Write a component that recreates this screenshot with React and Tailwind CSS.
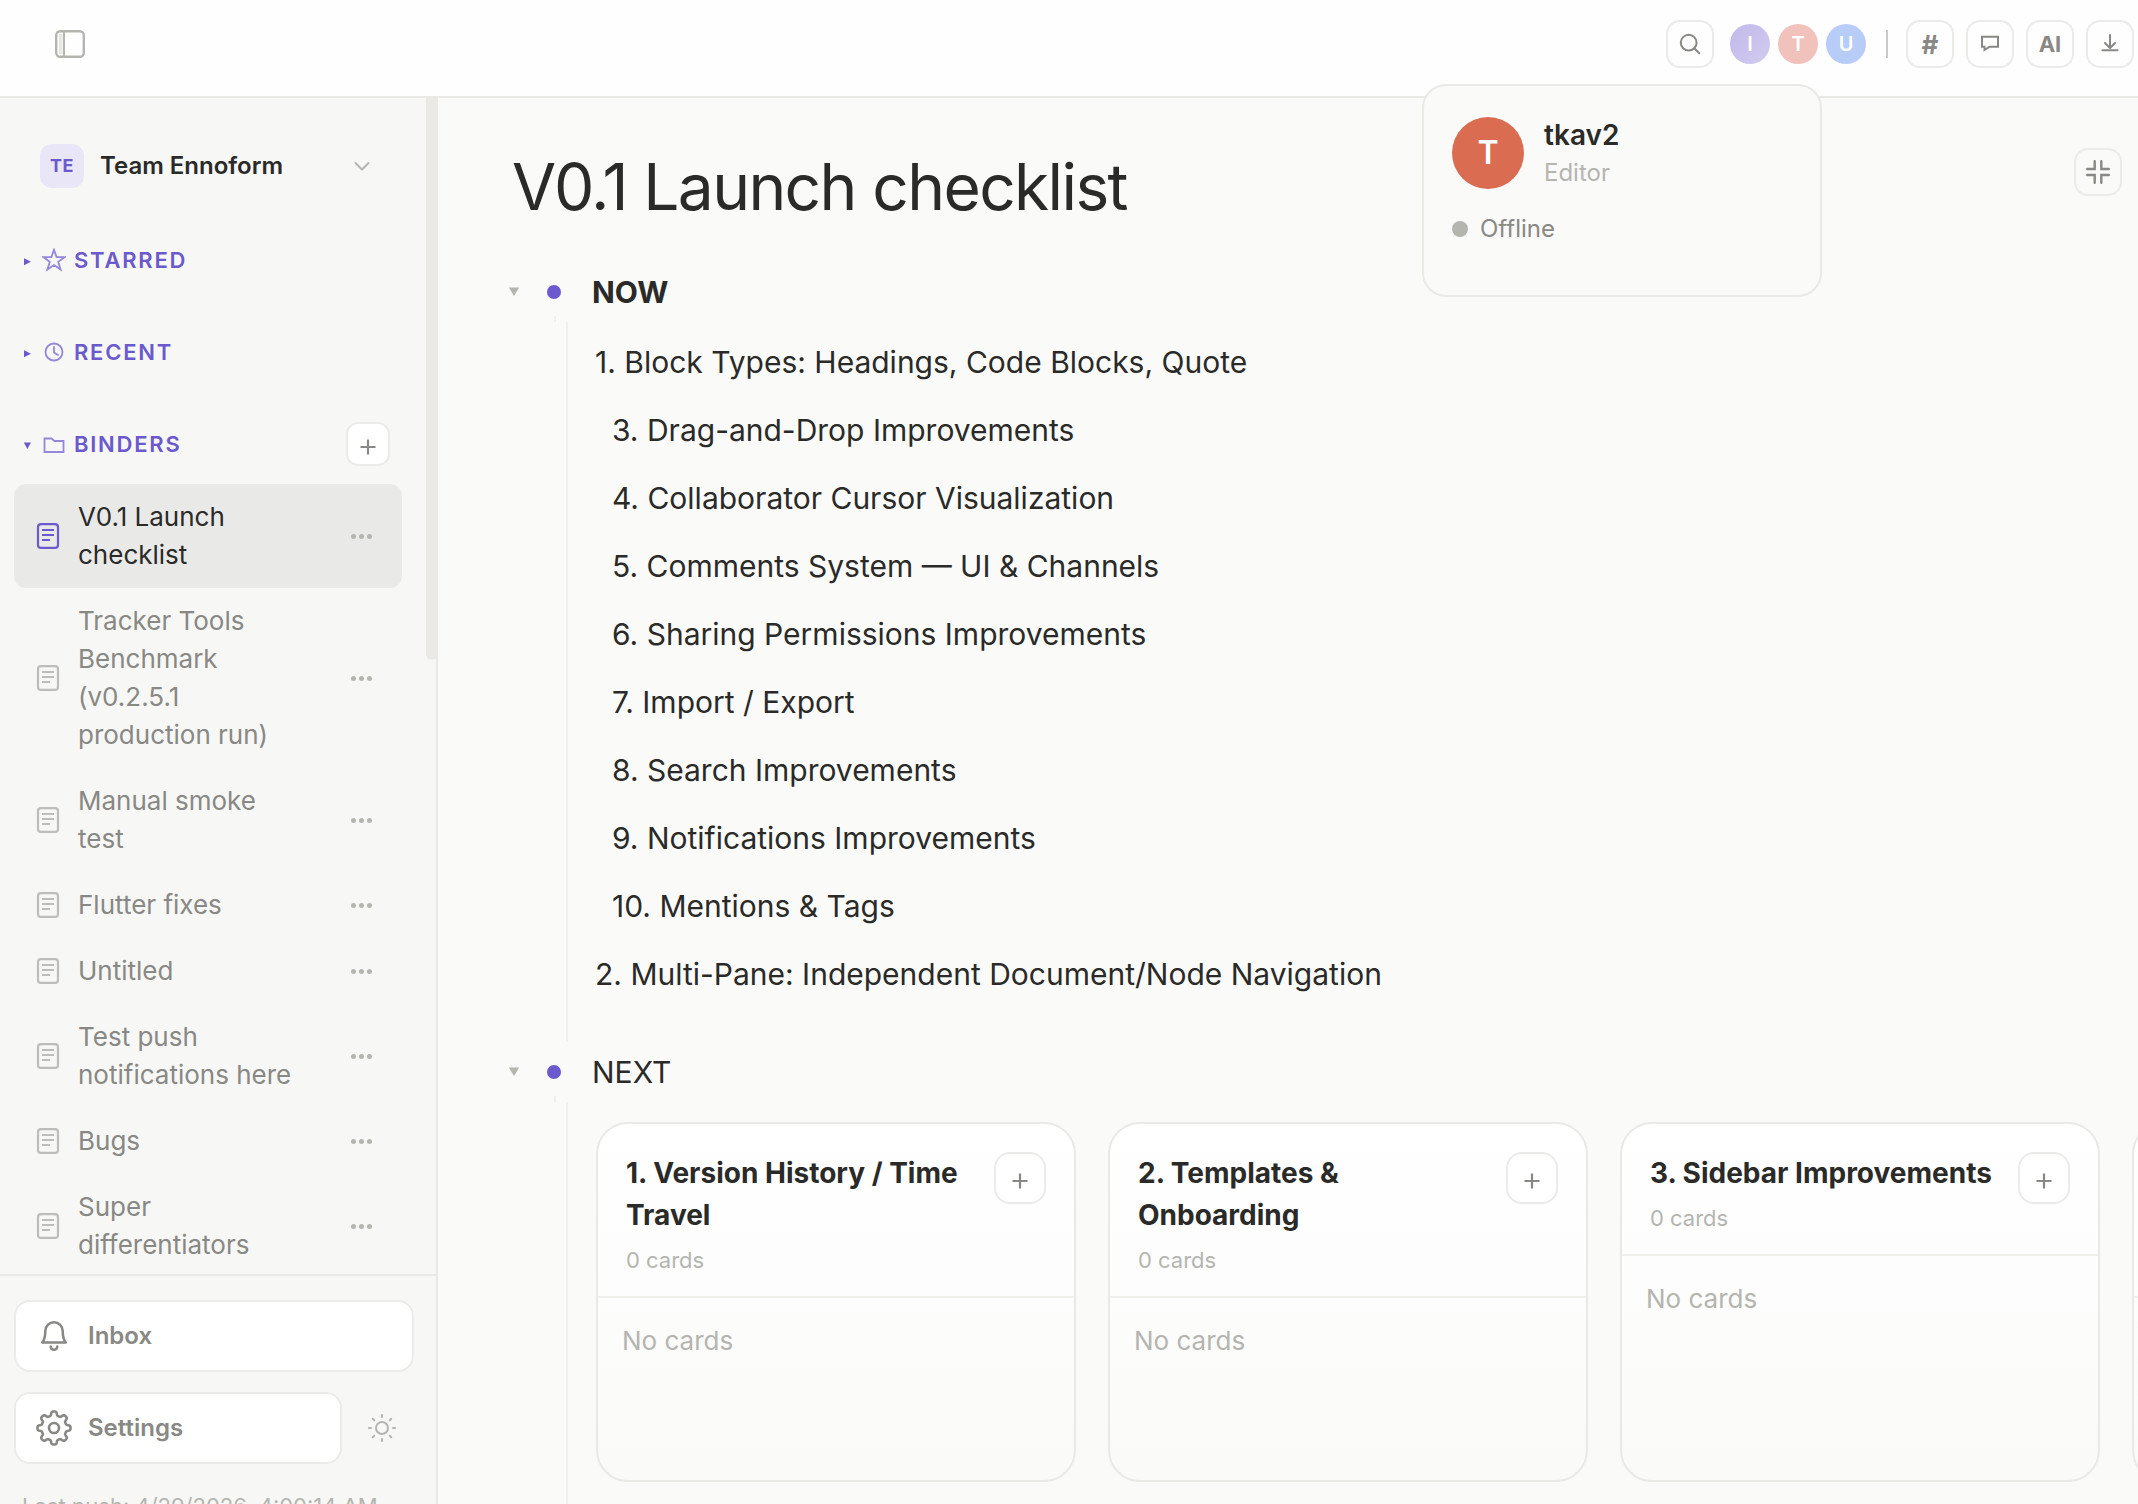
import React from "react";

const binders = [
  { name: "V0.1 Launch checklist", active: true },
  { name: "Tracker Tools Benchmark (v0.2.5.1 production run)" },
  { name: "Manual smoke test" },
  { name: "Flutter fixes" },
  { name: "Untitled" },
  { name: "Test push notifications here" },
  { name: "Bugs" },
  { name: "Super differentiators" },
];

const nowItems = [
  { text: "1. Block Types: Headings, Code Blocks, Quote" },
  { text: "3. Drag-and-Drop Improvements", nested: true },
  { text: "4. Collaborator Cursor Visualization", nested: true },
  { text: "5. Comments System — UI & Channels", nested: true },
  { text: "6. Sharing Permissions Improvements", nested: true },
  { text: "7. Import / Export", nested: true },
  { text: "8. Search Improvements", nested: true },
  { text: "9. Notifications Improvements", nested: true },
  { text: "10. Mentions & Tags", nested: true },
  { text: "2. Multi-Pane: Independent Document/Node Navigation" },
];

const columns = [
  "1. Version History / Time Travel",
  "2. Templates & Onboarding",
  "3. Sidebar Improvements",
];

// eight rounded teeth round a 36 unit box
const gearPoints = Array.from({ length: 192 }, (_, i) => {
  const angle = (i / 192) * Math.PI * 2;
  const r = 14.5 + 2 * Math.tanh(2.2 * Math.cos(8 * angle)) / Math.tanh(2.2);
  return `${(18 + r * Math.cos(angle)).toFixed(2)},${(18 + r * Math.sin(angle)).toFixed(2)}`;
}).join(" ");

function Icon({ size, box = 24, width = 1.5, className = "", children }) {
  return (
    <svg
      width={size}
      height={size}
      viewBox={`0 0 ${box} ${box}`}
      fill="none"
      stroke="currentColor"
      strokeWidth={width}
      strokeLinecap="round"
      strokeLinejoin="round"
      className={`shrink-0 ${className}`}
      aria-hidden="true"
    >
      {children}
    </svg>
  );
}

function Caret({ open }) {
  return (
    <svg width="8" height="12" viewBox="0 0 8 12" fill="currentColor" className="shrink-0" aria-hidden="true">
      {open ? <path d="M0.8 4.500h7.200L4.400 11z" /> : <path d="M1 4.300v7L8 7.800z" />}
    </svg>
  );
}

function PlusIcon() {
  return (
    <Icon size={16} box={16} width={2.2} className="mt-1.5">
      <path strokeLinecap="butt" d="M8 0.5v15M0.5 8h15" />
    </Icon>
  );
}

function ToolButton({ label, className = "text-[22px]", children }) {
  return (
    <button
      aria-label={label}
      className={`flex size-12 shrink-0 items-center justify-center rounded-[14px] border-2 border-[#ebebe9] font-bold text-[#888884] ${className}`}
    >
      {children}
    </button>
  );
}

function Header() {
  return (
    <header className="flex h-[98px] shrink-0 items-center justify-between border-b-2 border-[#e9e9e6] bg-[#fefefe] pr-1 pb-2 pl-[54px]">
      <button aria-label="Toggle sidebar" className="text-[#b5b5b0]">
        <Icon size={32} box={32} width={2.4}>
          <rect x="2.2" y="3.2" width="27.6" height="25.6" rx="4" />
          <rect x="5" y="6" width="3.5" height="20" fill="#e6e6e3" stroke="none" />
          <path d="M10 4v24" strokeWidth="2" />
        </Icon>
      </button>
      <div className="flex items-center">
        <ToolButton label="Search">
          <Icon size={24} width={2}>
            <circle cx="10.7" cy="10.7" r="7.9" />
            <path d="M16.300 16.300 21.300 21.300" />
          </Icon>
        </ToolButton>
        <div className="ml-4 flex gap-2 text-xl font-semibold text-white">
          <div className="flex size-10 items-center justify-center rounded-full bg-linear-to-br from-[#c2b9ea] to-[#d2cbef]">I</div>
          <div className="flex size-10 items-center justify-center rounded-full bg-[#f0c2bb]">T</div>
          <div className="flex size-10 items-center justify-center rounded-full bg-[#b8ccf8]">U</div>
        </div>
        <div className="mr-[18px] ml-5 h-7 w-0.5 bg-[#c9c9c6]" />
        <div className="flex gap-3">
          <ToolButton label="Channels" className="text-[26px]">#</ToolButton>
          <ToolButton label="Comments">
            <Icon size={20} box={20} width={2}>
              <path strokeLinejoin="miter" d="M2 2.700h16v10H9.500L4.500 16v-3.300H2z" />
            </Icon>
          </ToolButton>
          <ToolButton label="Assistant">AI</ToolButton>
          <ToolButton label="Download">
            <Icon size={20} box={20} width={2}>
              <path d="M10 1v12.500M5 9l5 5 5-5M2.500 16.200h15" />
            </Icon>
          </ToolButton>
        </div>
      </div>
    </header>
  );
}

function SectionTitle({ label, open, icon, children }) {
  return (
    <div className="flex h-11 items-center pr-[46px] pl-[23px]">
      <button className="flex items-center text-[22px] font-semibold tracking-[0.08em] text-[#6a5acd]">
        <Caret open={open} />
        <span className="mr-2 ml-[11px] opacity-70">{icon}</span>
        {label}
      </button>
      {children}
    </div>
  );
}

function BinderItem({ name, active }) {
  return (
    <li
      className={`flex items-center rounded-xl py-3.5 pr-[30px] pl-[22px] ${
        active ? "bg-[#e9e9e8] text-[#2a2a28]" : "text-[#888884]"
      }`}
    >
      <Icon size={26} box={26} width={2.2} className={active ? "text-[#6a5acd]" : "text-[#bdbdb9]"}>
        <rect x="2" y="1.1" width="20" height="23.8" rx="3" />
        <path strokeLinecap="butt" d="M6 7h12M6 12h12M6 17h8" />
      </Icon>
      <a href="#" className="ml-4 w-[220px] text-[26px] leading-[38px]">
        {name}
      </a>
      <button aria-label={`More options for ${name}`} className="ml-auto flex gap-[3px] text-[#b5b5b0]">
        <span className="size-[5px] rounded-full bg-current" />
        <span className="size-[5px] rounded-full bg-current" />
        <span className="size-[5px] rounded-full bg-current" />
      </button>
    </li>
  );
}

function Sidebar() {
  return (
    <aside className="flex w-[438px] shrink-0 flex-col border-r-2 border-[#e9e9e6] bg-[#f7f7f6]">
      <div className="relative min-h-0 flex-1">
        <div className="absolute top-0 -right-0.5 h-[562px] w-3 rounded-b-md bg-[#eae9e5]" />
        <button className="mt-[46px] flex w-full items-center pr-[66px] pl-10">
          <span className="flex size-11 items-center justify-center rounded-xl bg-[#e9e6f7] text-lg font-bold tracking-wide text-[#6a5acd]">
            TE
          </span>
          <span className="ml-4 text-2xl font-semibold text-[#2a2a28]">Team Ennoform</span>
          <Icon size={16} box={16} width={2} className="ml-auto text-[#b5b5b0]">
            <path d="M1.500 5l6.500 6.500 6.500-6.500" />
          </Icon>
        </button>
        <div className="mt-[50px] flex flex-col gap-12">
          <SectionTitle
            label="STARRED"
            icon={
              <Icon size={24} width={1.8}>
                <path strokeLinejoin="miter" d="M12 1.800 14.600 9.200h7.800L16.200 13.800l2.400 7.800L12 17l-6.600 4.600 2.400-7.800L1.600 9.200h7.800z" />
              </Icon>
            }
          />
          <SectionTitle
            label="RECENT"
            icon={
              <Icon size={24} width={1.8}>
                <circle cx="12" cy="12" r="8.500" />
                <path d="M12 7v5.500l4 2.500" />
              </Icon>
            }
          />
          <SectionTitle
            label="BINDERS"
            open
            icon={
              <Icon size={24} width={1.8}>
                <path strokeLinejoin="miter" d="M2.500 20V6.500h7l3 2.500h9v11z" />
              </Icon>
            }
          >
            <button
              aria-label="Add binder"
              className="ml-auto flex size-11 items-center justify-center rounded-xl border-2 border-[#ebebe9] bg-white text-[#888884]"
            >
              <PlusIcon />
            </button>
          </SectionTitle>
        </div>
        <ul className="mt-[18px] mr-[34px] ml-3.5">
          {binders.map((binder) => (
            <BinderItem key={binder.name} {...binder} />
          ))}
        </ul>
      </div>
      <div className="h-[230px] shrink-0 overflow-hidden border-t-2 border-[#e9e9e6] pt-6 pr-[22px] pl-3.5 text-2xl font-semibold text-[#888884]">
        <button className="flex h-[72px] w-full items-center rounded-2xl border-2 border-[#ebebe9] bg-white pl-5">
          <Icon size={36} width={1.7}>
            <path d="M4.200 16.300h15.600c-1.300-1.500-2-3.500-2-7.600a5.800 5.800 0 0 0-11.600 0c0 4.100-.7 6.100-2 7.600zM9.800 19a2.200 2.200 0 0 0 4.400 0" />
          </Icon>
          <span className="ml-4">Inbox</span>
        </button>
        <div className="mt-5 flex items-center">
          <button className="flex h-[72px] flex-1 items-center rounded-2xl border-2 border-[#ebebe9] bg-white pl-5">
            <Icon size={36} box={36} width={2.6}>
              <circle cx="18" cy="18" r="5" />
              <polygon points={gearPoints} />
            </Icon>
            <span className="ml-4">Settings</span>
          </button>
          <button aria-label="Switch theme" className="mr-[18px] ml-[26px] text-[#b5b5b0]">
            <Icon size={28} box={28} width={2}>
              <circle cx="14" cy="14" r="6" />
              <path d="M14 1v2M14 25v2M1 14h2M25 14h2M4.800 4.800l1.400 1.400M21.800 21.800l1.400 1.400M4.800 23.200l1.400-1.400M21.800 6.200l1.400-1.400" />
            </Icon>
          </button>
        </div>
        <p className="mt-[26px] pl-2 text-[22px] leading-8 font-normal whitespace-nowrap text-[#b5b5b0]">
          Last push: 4/29/2026, 4:00:14 AM
        </p>
      </div>
    </aside>
  );
}

function Node({ title, bold, children }) {
  return (
    <section>
      <div className="flex h-[60px] items-center">
        <button aria-label={`Collapse ${title}`} className="ml-1.5 flex w-4 justify-center text-[#b5b5b0]">
          <svg width="12" height="12" viewBox="0 0 12 12" fill="currentColor" aria-hidden="true">
            <path d="M0.800 1.500h10.400L6 10z" />
          </svg>
        </button>
        <span className="ml-[25px] size-3.5 rounded-full bg-[#6a5acd]" />
        <h2 className={`ml-[31px] text-[30px] leading-[48px] ${bold ? "font-bold" : ""}`}>{title}</h2>
      </div>
      <div className="-mt-1.5 ml-[54px] h-1.5 w-0.5 bg-[#efefed]" />
      <div className="ml-[66px] border-l-2 border-[#efefed]">{children}</div>
    </section>
  );
}

function Column({ title }) {
  return (
    <article className="flex h-[360px] w-[480px] shrink-0 flex-col rounded-[32px] border-2 border-[#e9e9e6] bg-linear-to-b from-white to-[#fafaf9]">
      <div className="flex items-start justify-between gap-4 border-b-2 border-[#efefec] px-7 pt-7 pb-5">
        <div>
          <h3 className="text-[28px] leading-[42px] font-bold">{title}</h3>
          <p className="mt-2 text-[22px] leading-8 text-[#b5b5b0]">0 cards</p>
        </div>
        <button
          aria-label={`Add card to ${title}`}
          className="flex size-[52px] shrink-0 items-center justify-center rounded-2xl border-2 border-[#ebebe9] bg-white text-[#888884]"
        >
          <PlusIcon />
        </button>
      </div>
      <p className="p-6 text-[26px] leading-[38px] text-[#b5b5b0]">No cards</p>
    </article>
  );
}

function UserCard() {
  return (
    <div className="absolute top-[84px] right-[316px] w-[400px] rounded-3xl border-2 border-[#e9e9e6] bg-[#fafaf9] px-7 pt-[29px] pb-12">
      <div className="flex items-center gap-5">
        <div className="flex size-[72px] items-center justify-center rounded-full bg-[#d96c51] text-[32px] font-semibold text-white">T</div>
        <div>
          <p className="text-[28px] leading-10 font-semibold">tkav2</p>
          <p className="text-2xl leading-9 text-[#b5b5b0]">Editor</p>
        </div>
      </div>
      <div className="mt-5 flex items-center gap-3 text-2xl leading-9 text-[#888884]">
        <span className="size-4 rounded-full bg-[#b5b5b0]" />
        Offline
      </div>
    </div>
  );
}

export default function App() {
  return (
    <div className="relative flex h-screen flex-col overflow-hidden bg-[#fafaf9] font-['Inter',sans-serif] text-[#2a2a28]">
      <Header />
      <div className="flex min-h-0 flex-1">
        <Sidebar />
        <main className="min-w-0 flex-1 overflow-hidden pt-[50px] pl-[62px]">
          <div className="flex items-start justify-between pr-4">
            <h1 className="ml-3 text-[64px] leading-[78px] tracking-tight">V0.1 Launch checklist</h1>
            <ToolButton label="Collapse all">
              <Icon size={28} box={28} width={2.4}>
                <path strokeLinejoin="miter" d="M10.700 3.200v7.800H3.200M17.300 3.200v7.800h7.500M10.700 24.800V17H3.200M17.300 24.800V17h7.500" />
              </Icon>
            </ToolButton>
          </div>
          <div className="mt-9">
            <Node title="NOW" bold>
              <ul className="pt-1.5 pb-[34px] pl-[27px] text-[30px]">
                {nowItems.map((item) => (
                  <li key={item.text} className={`leading-[68px] ${item.nested ? "pl-[17px]" : ""}`}>
                    {item.text}
                  </li>
                ))}
              </ul>
            </Node>
            <Node title="NEXT">
              <div className="flex h-[500px] items-start gap-8 pt-5 pl-7">
                {columns.map((title) => (
                  <Column key={title} title={title} />
                ))}
                <article className="h-[360px] w-[480px] shrink-0 rounded-[32px] border-2 border-[#e9e9e6] bg-linear-to-b from-white to-[#fafaf9]">
                  <div className="h-[174px] border-b-2 border-[#efefec]" />
                </article>
              </div>
            </Node>
          </div>
        </main>
      </div>
      <UserCard />
    </div>
  );
}
